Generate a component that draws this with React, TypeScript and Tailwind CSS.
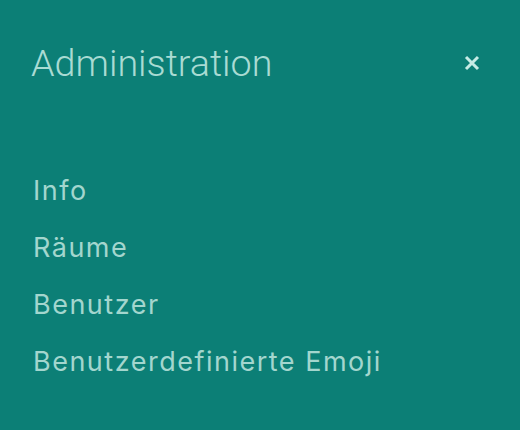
import React from "react";

const items = ["Info", "Räume", "Benutzer", "Benutzerdefinierte Emoji"];

const App = () => {
  return (
    <main className="w-[520px] h-[430px] bg-[#0c7f76] overflow-hidden font-['Roboto',sans-serif]">
      <header className="flex items-center justify-between pl-[31px] pr-[38px] pt-[40px]">
        <h1 className="text-[37.7px] leading-[46px] font-light text-[#a9dbd3]">
          Administration
        </h1>
        <button className="w-[20px] h-[20px] flex items-center justify-center text-[#c6ebe5]">
          <svg width="16" height="16" viewBox="0 0 16 16">
            <path d="M2 2L14 14M14 2L2 14" stroke="currentColor" strokeWidth="3" strokeLinecap="butt" />
          </svg>
        </button>
      </header>
      <nav className="flex flex-col pl-[33px] mt-[76px] font-['Inter',sans-serif]">
        {items.map((item) => (
          <a key={item} className="text-[27px] leading-[57px] tracking-[1.5px] text-[#a3d6ce]">
            {item}
          </a>
        ))}
      </nav>
    </main>
  );
};

export default App;
